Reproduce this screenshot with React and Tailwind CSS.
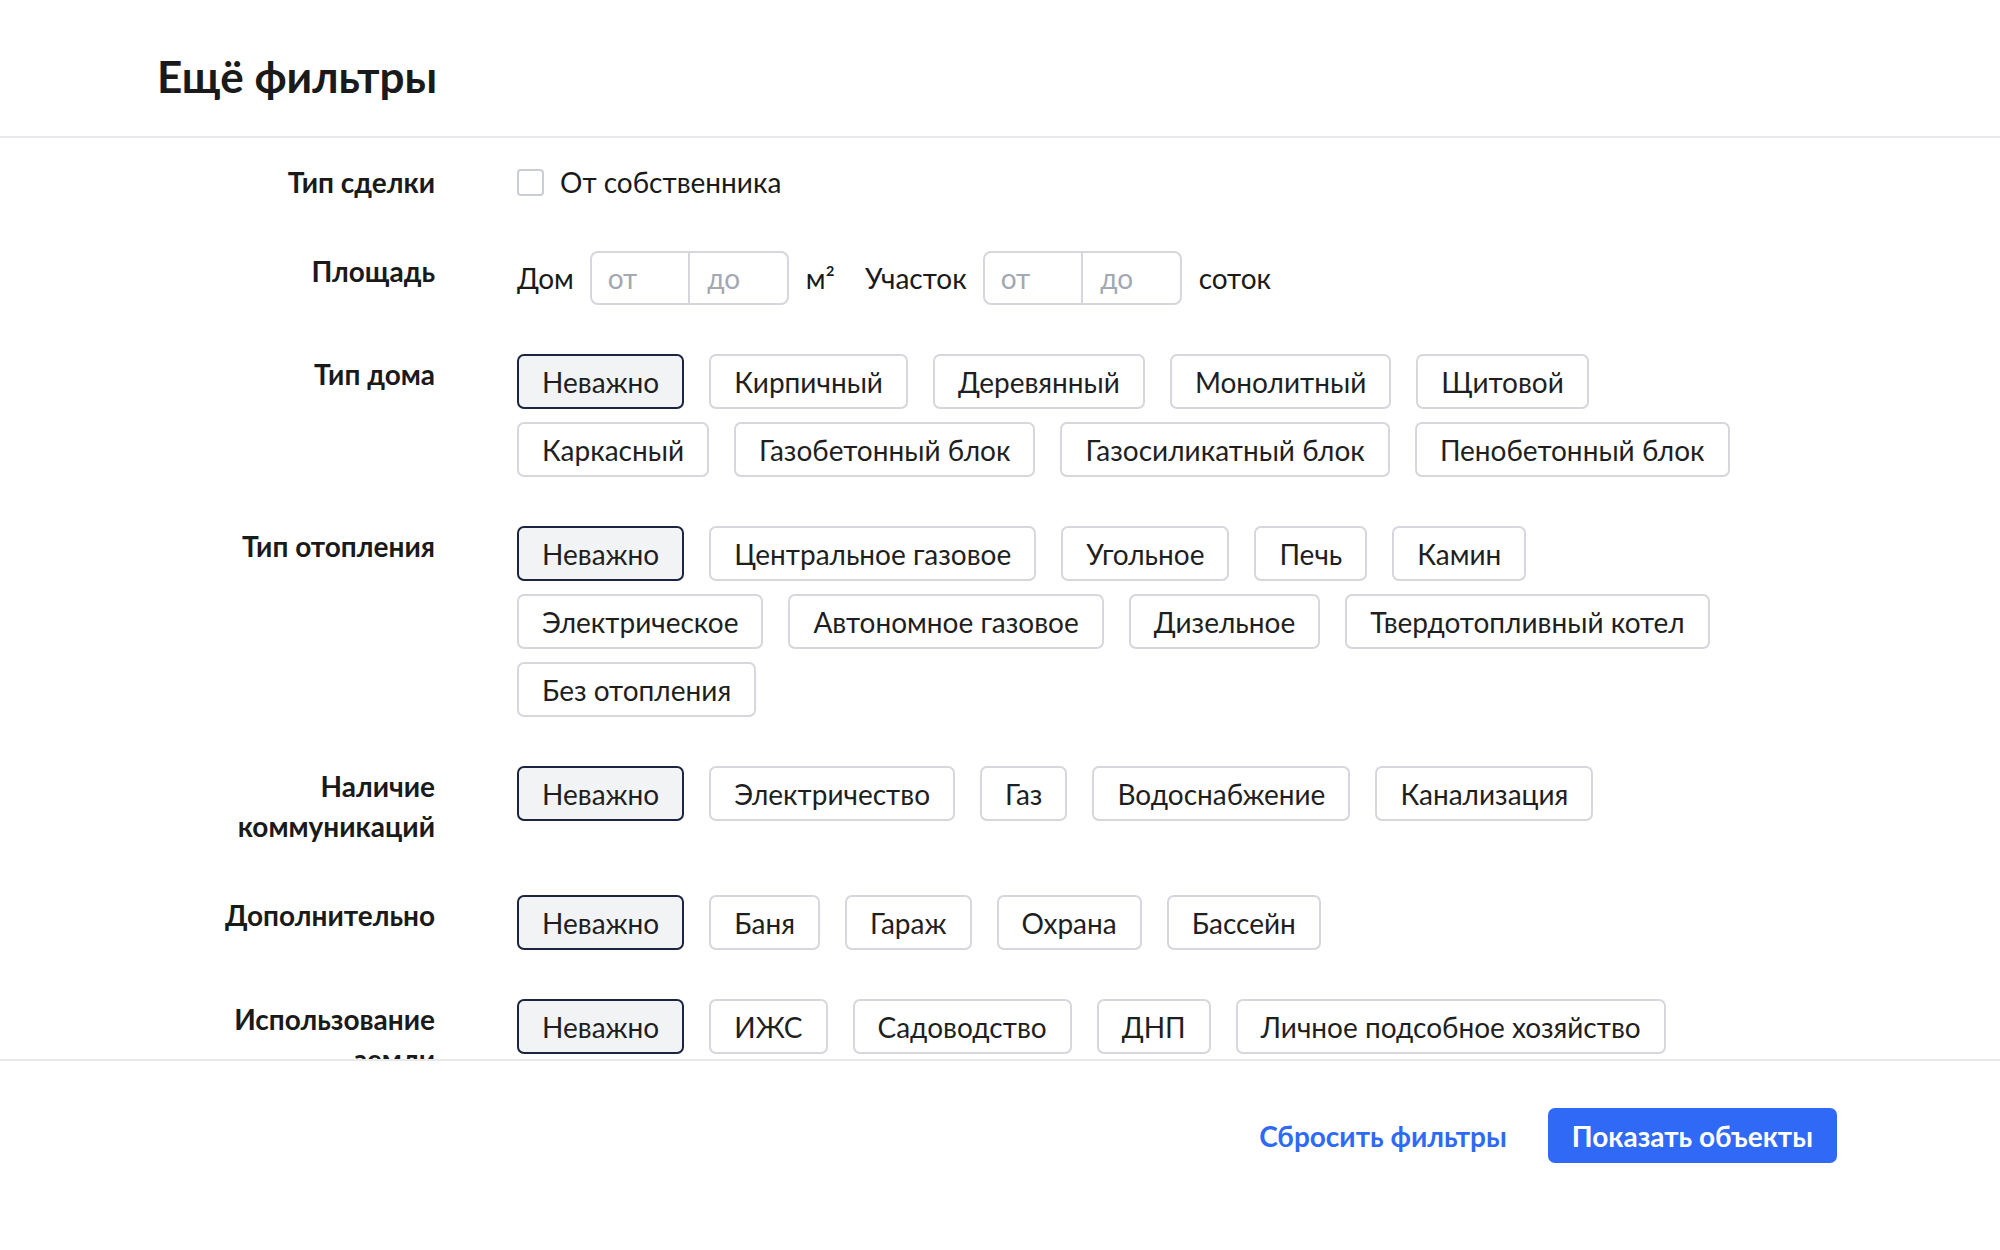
import React, { useState } from 'react';

const groups = [
  {
    key: 'house',
    label: ['Тип дома'],
    options: ['Неважно', 'Кирпичный', 'Деревянный', 'Монолитный', 'Щитовой', 'Каркасный', 'Газобетонный блок', 'Газосиликатный блок', 'Пенобетонный блок'],
  },
  {
    key: 'heating',
    label: ['Тип отопления'],
    options: ['Неважно', 'Центральное газовое', 'Угольное', 'Печь', 'Камин', 'Электрическое', 'Автономное газовое', 'Дизельное', 'Твердотопливный котел', 'Без отопления'],
  },
  {
    key: 'utilities',
    label: ['Наличие', 'коммуникаций'],
    options: ['Неважно', 'Электричество', 'Газ', 'Водоснабжение', 'Канализация'],
  },
  {
    key: 'extra',
    label: ['Дополнительно'],
    options: ['Неважно', 'Баня', 'Гараж', 'Охрана', 'Бассейн'],
  },
  {
    key: 'land',
    label: ['Использование', 'земли'],
    options: ['Неважно', 'ИЖС', 'Садоводство', 'ДНП', 'Личное подсобное хозяйство'],
  },
];

function Row({ label, children }) {
  return (
    <div className="flex">
      <div className="w-[278px] shrink-0 text-right text-[28px] leading-[40px] font-bold text-[#1a1a1a]">
        {label.map((line) => (
          <div key={line}>{line}</div>
        ))}
      </div>
      <div className="ml-[82px] w-[1253px]">{children}</div>
    </div>
  );
}

function Chip({ text, active, onClick }) {
  return (
    <button
      onClick={onClick}
      className={
        active
          ? 'h-[55px] px-[23px] rounded-[7px] border-2 border-[#1b2440] bg-[#f2f3f5] text-[28px] text-[#1f1f1f]'
          : 'h-[55px] px-[23px] rounded-[7px] border-2 border-[#d5d7dd] bg-white text-[28px] text-[#1f1f1f]'
      }
    >
      {text}
    </button>
  );
}

function RangeInput() {
  return (
    <div className="flex h-[54px] w-[199px] rounded-[8px] border-2 border-[#d5d7dd]">
      <input placeholder="от" className="w-1/2 min-w-0 pl-[16px] text-[28px] outline-none placeholder:text-[#a3a8b2] bg-transparent" />
      <div className="w-[2px] bg-[#d5d7dd]" />
      <input placeholder="до" className="w-1/2 min-w-0 pl-[17px] text-[28px] outline-none placeholder:text-[#a3a8b2] bg-transparent" />
    </div>
  );
}

export default function App() {
  const [selected, setSelected] = useState({ house: 0, heating: 0, utilities: 0, extra: 0, land: 0 });
  const [owner, setOwner] = useState(false);

  return (
    <div className="h-[1250px] flex flex-col bg-white font-['Lato',sans-serif] text-[#1a1a1a]">
      <div className="h-[138px] shrink-0 border-b-2 border-[#e8e9ed] pl-[157px] pt-[50px]">
        <h1 className="text-[44px] leading-[52px] font-bold">Ещё фильтры</h1>
      </div>

      <div className="flex-1 overflow-hidden pl-[157px] pt-[24px]">
        <div className="flex flex-col gap-[49px]">
          <Row label={['Тип сделки']}>
            <label className="flex h-[40px] items-center gap-[16px] text-[28px]">
              <span
                onClick={() => setOwner(!owner)}
                className="h-[27px] w-[27px] rounded-[4px] border-2 border-[#c9cdd4] bg-white"
              />
              От собственника
            </label>
          </Row>

          <Row label={['Площадь']}>
            <div className="flex h-[54px] items-center text-[28px]">
              <span>Дом</span>
              <div className="ml-[16px]">
                <RangeInput />
              </div>
              <span className="ml-[17px]">м²</span>
              <span className="ml-[30px]">Участок</span>
              <div className="ml-[16px]">
                <RangeInput />
              </div>
              <span className="ml-[17px]">соток</span>
            </div>
          </Row>

          {groups.map((g) => (
            <Row key={g.key} label={g.label}>
              <div className="flex flex-wrap gap-x-[25px] gap-y-[13px]">
                {g.options.map((opt, i) => (
                  <Chip
                    key={opt}
                    text={opt}
                    active={selected[g.key] === i}
                    onClick={() => setSelected({ ...selected, [g.key]: i })}
                  />
                ))}
              </div>
            </Row>
          ))}
        </div>
      </div>

      <div className="h-[191px] shrink-0 border-t-2 border-[#e8e9ed] flex justify-end items-start pt-[47px] pr-[163px]">
        <div className="flex items-center gap-[41px]">
          <button className="text-[28px] font-bold text-[#2f69f5]">Сбросить фильтры</button>
          <button className="h-[55px] px-[24px] rounded-[7px] bg-[#2f69f5] text-[28px] font-bold text-white">
            Показать объекты
          </button>
        </div>
      </div>
    </div>
  );
}
